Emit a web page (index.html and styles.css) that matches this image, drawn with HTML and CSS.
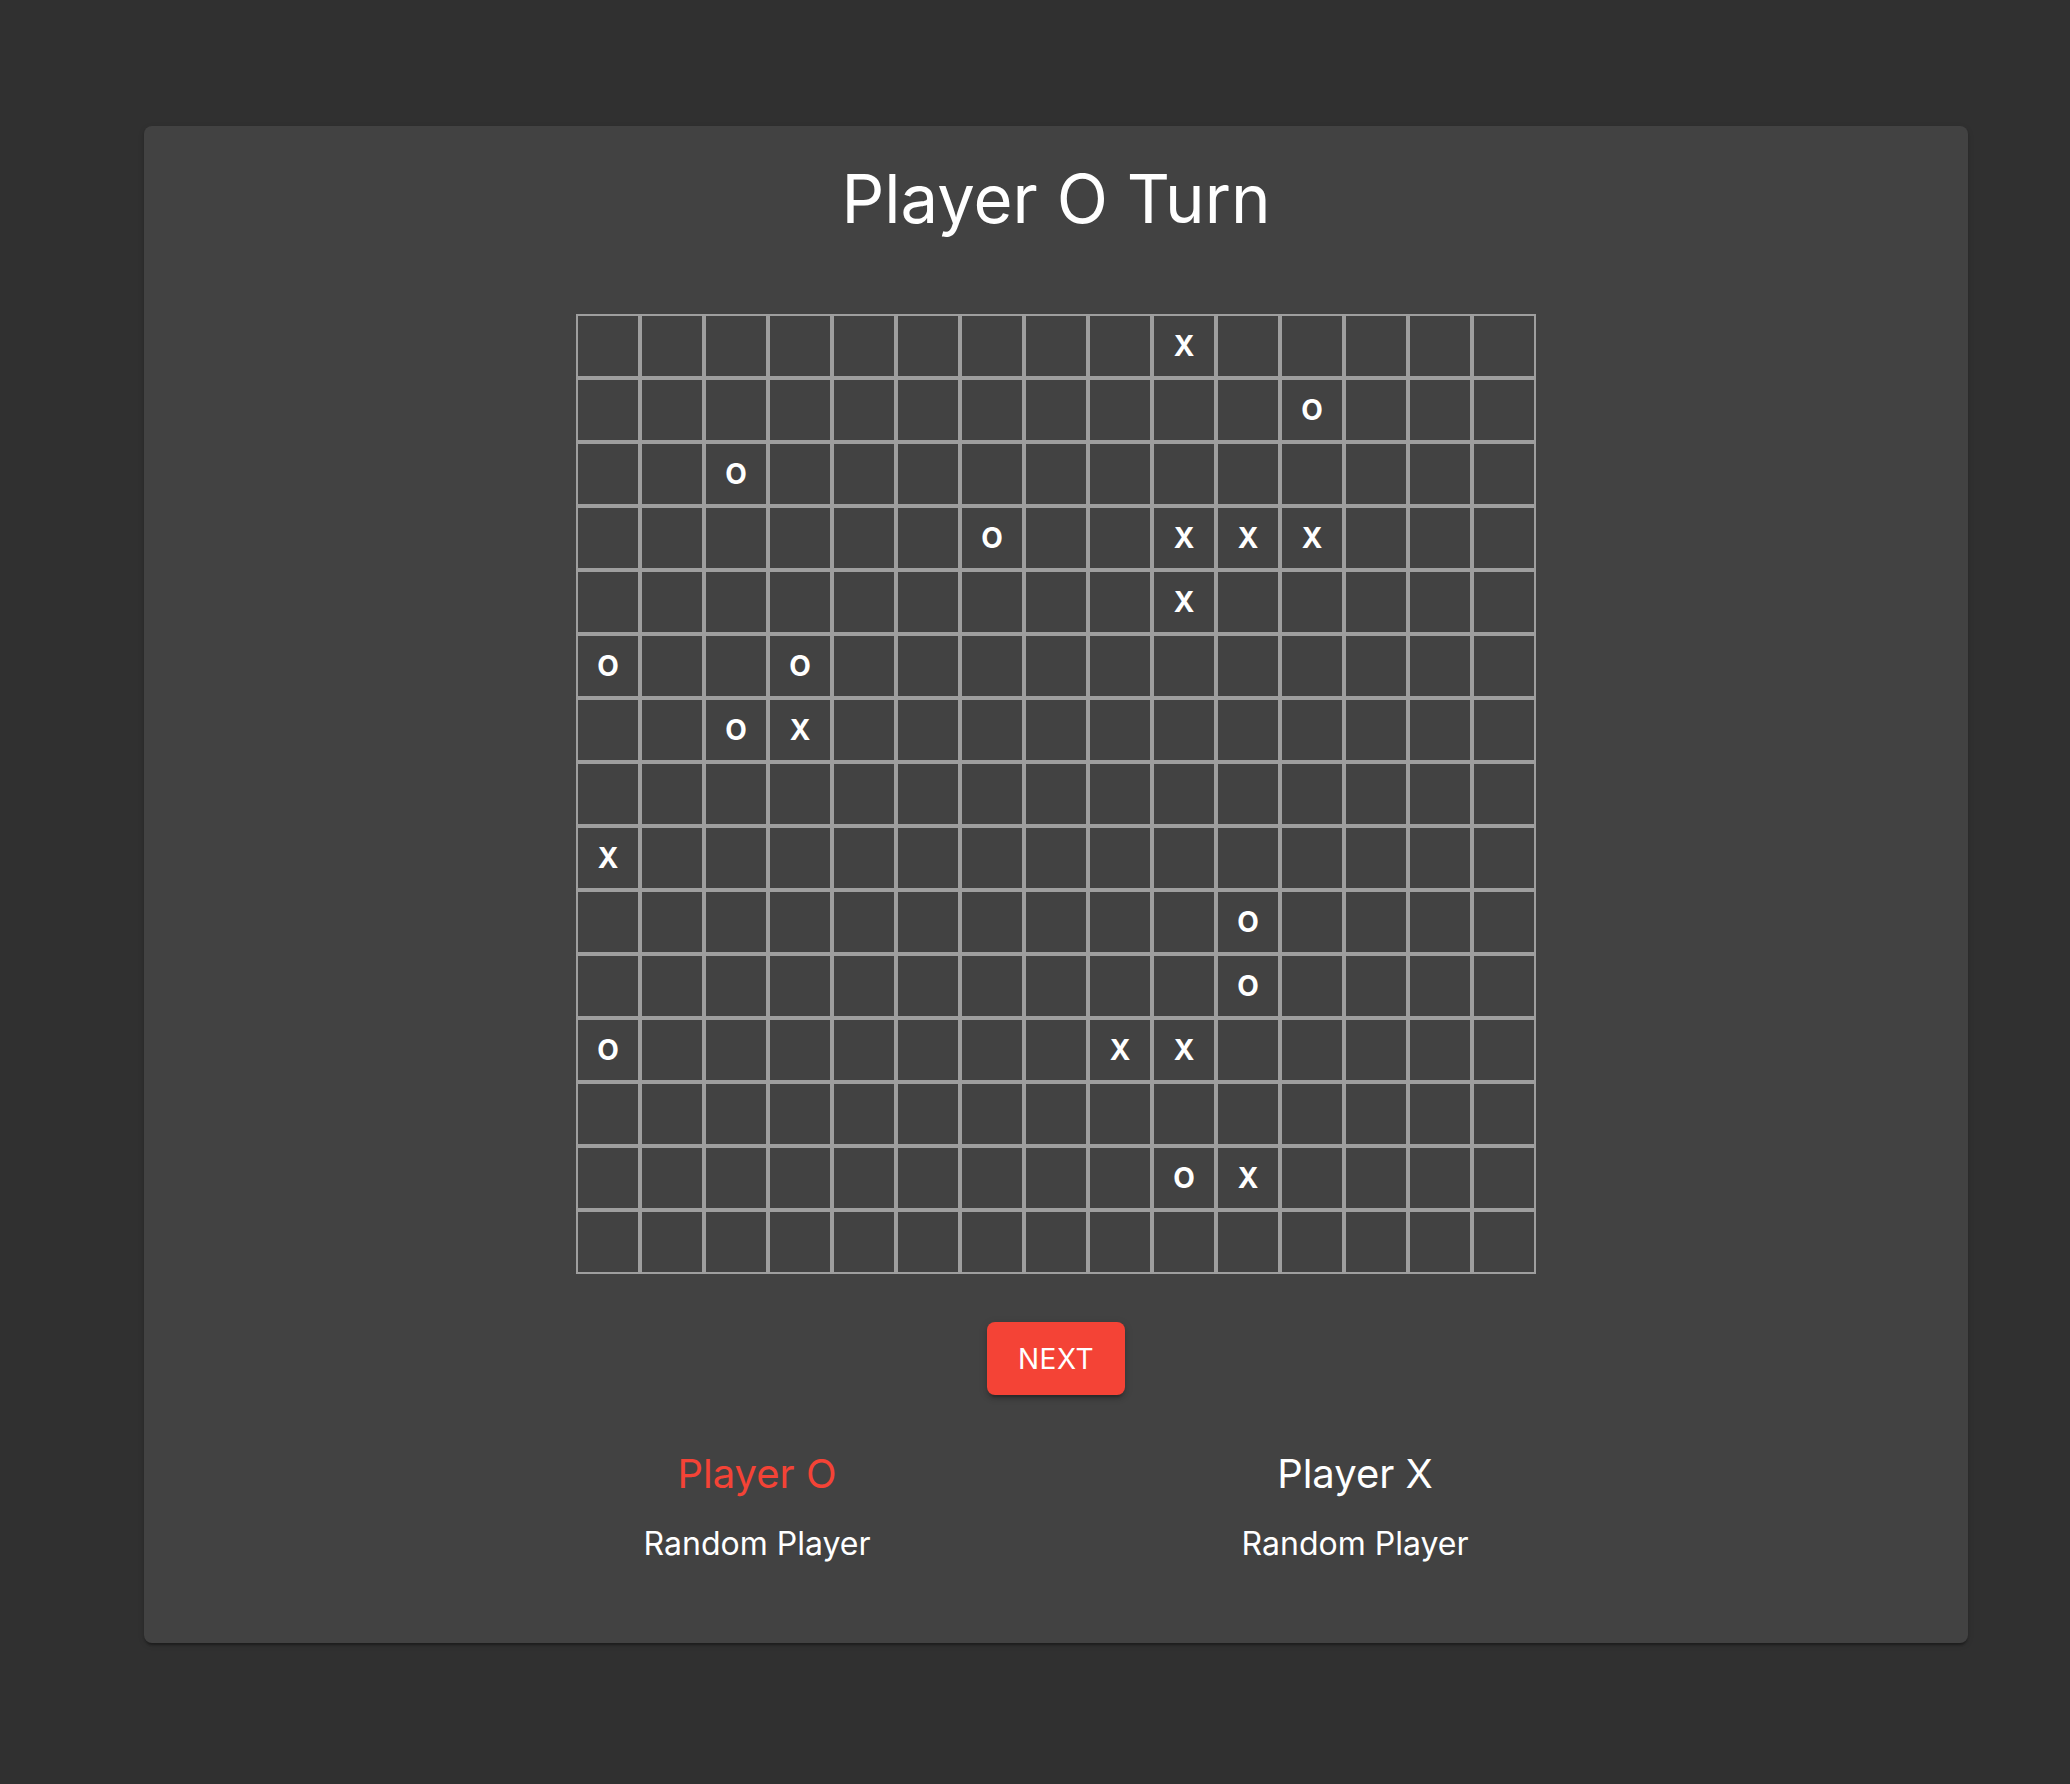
FILE: index.html
```html
<!DOCTYPE html>
<html lang="en">
<head>
<meta charset="utf-8">
<title>Gomoku</title>
<link rel="stylesheet" href="styles.css">
</head>
<body>
<main class="card">
  <h1 class="title">Player O Turn</h1>
  <div class="board" id="board"></div>
  <div class="actions">
    <button class="next-btn" type="button">NEXT</button>
  </div>
  <div class="players">
    <div class="player">
      <div class="player-name active">Player O</div>
      <div class="player-type">Random Player</div>
    </div>
    <div class="player">
      <div class="player-name">Player X</div>
      <div class="player-type">Random Player</div>
    </div>
  </div>
</main>
<script src="script.js"></script>
</body>
</html>
```
FILE: styles.css
```css
html, body {
  margin: 0;
  padding: 0;
}
body {
  background: #303030;
  font-family: Inter, "Noto Sans", sans-serif;
  color: #ffffff;
  min-height: 1784px;
  padding-top: 126px;
  padding-left: 144px;
  box-sizing: border-box;
}
.card {
  width: 1824px;
  box-sizing: border-box;
  background: #424242;
  border-radius: 8px;
  box-shadow: 0 4px 2px -2px rgba(0,0,0,0.2), 0 2px 2px rgba(0,0,0,0.14), 0 2px 6px rgba(0,0,0,0.12);
  padding: 33px 0 79px;
  display: flex;
  flex-direction: column;
  align-items: center;
}
.title {
  margin: 0;
  font-size: 67px;
  line-height: 80px;
  font-weight: 400;
  color: #ffffff;
}
.board {
  margin-top: 75px;
  display: grid;
  grid-template-columns: repeat(15, 64px);
  grid-auto-rows: 64px;
}
.cell {
  box-sizing: border-box;
  border: 2px solid #9e9e9e;
  display: flex;
  align-items: center;
  justify-content: center;
  font-size: 28px;
  font-weight: 700;
  color: #ffffff;
}
.actions {
  margin-top: 48px;
  display: flex;
  justify-content: center;
}
.next-btn {
  width: 138px;
  height: 73px;
  border: none;
  border-radius: 8px;
  background: #f44336;
  color: #ffffff;
  font-family: Inter, "Noto Sans", sans-serif;
  font-size: 28px;
  font-weight: 400;
  letter-spacing: 0.5px;
  box-shadow: 0 6px 2px -4px rgba(0,0,0,0.2), 0 4px 4px rgba(0,0,0,0.14), 0 2px 10px rgba(0,0,0,0.12);
  cursor: pointer;
}
.players {
  margin-top: 54px;
  display: flex;
  justify-content: center;
}
.player {
  width: 598px;
  display: flex;
  flex-direction: column;
  align-items: center;
}
.player-name {
  font-size: 40px;
  line-height: 50px;
  color: #ffffff;
}
.player-name.active {
  color: #f44336;
}
.player-type {
  margin-top: 25px;
  font-size: 32px;
  line-height: 40px;
  color: #ffffff;
}
```
FILE: script.js
```js
(function () {
  var size = 15;
  var marks = {
    "0,9": "X",
    "1,11": "O",
    "2,2": "O",
    "3,6": "O", "3,9": "X", "3,10": "X", "3,11": "X",
    "4,9": "X",
    "5,0": "O", "5,3": "O",
    "6,2": "O", "6,3": "X",
    "8,0": "X",
    "9,10": "O",
    "10,10": "O",
    "11,0": "O", "11,8": "X", "11,9": "X",
    "13,9": "O", "13,10": "X"
  };
  var board = document.getElementById("board");
  for (var r = 0; r < size; r++) {
    for (var c = 0; c < size; c++) {
      var cell = document.createElement("div");
      cell.className = "cell";
      cell.textContent = marks[r + "," + c] || "";
      board.appendChild(cell);
    }
  }
})();
```
